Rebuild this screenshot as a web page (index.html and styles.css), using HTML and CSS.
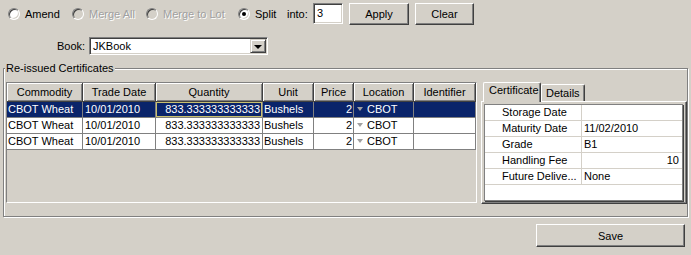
FILE: index.html
```html
<!DOCTYPE html>
<html lang="en">
<head>
  <meta charset="UTF-8">
  <title>Re-issue Certificates</title>
  <link rel="stylesheet" href="styles.css">
</head>
<body>
  <div class="window">

    <div class="toolbar">
      <label class="opt opt-amend"><span class="radio"></span>Amend</label>
      <label class="opt opt-mergeall disabled"><span class="radio"></span>Merge All</label>
      <label class="opt opt-mergelot disabled"><span class="radio"></span>Merge to Lot</label>
      <label class="opt opt-split"><span class="radio checked"></span>Split</label>
      <span class="into">into:</span>
      <span class="field into-field">3</span>
      <span class="btn btn-apply">Apply</span>
      <span class="btn btn-clear">Clear</span>
    </div>

    <div class="book-row">
      <span class="book-label">Book:</span>
      <span class="combo">
        <span class="combo-text">JKBook</span>
        <span class="combo-btn"><span class="arrow"></span></span>
      </span>
    </div>

    <fieldset class="group">
      <legend>Re-issued Certificates</legend>
      <div class="group-body">

        <div class="grid-box">
          <table class="grid">
            <colgroup>
              <col class="c-commodity"><col class="c-date"><col class="c-qty"><col class="c-unit">
              <col class="c-price"><col class="c-loc"><col class="c-ident">
            </colgroup>
            <thead>
              <tr>
                <th>Commodity</th><th>Trade Date</th><th>Quantity</th><th>Unit</th>
                <th>Price</th><th>Location</th><th>Identifier</th>
              </tr>
            </thead>
            <tbody>
              <tr class="selected">
                <td>CBOT Wheat</td><td class="date">10/01/2010</td>
                <td class="num qty focus">833.333333333333</td><td>Bushels</td>
                <td class="num">2</td><td class="loc"><span class="tri"></span>CBOT</td><td></td>
              </tr>
              <tr>
                <td>CBOT Wheat</td><td class="date">10/01/2010</td>
                <td class="num qty">833.333333333333</td><td>Bushels</td>
                <td class="num">2</td><td class="loc"><span class="tri"></span>CBOT</td><td></td>
              </tr>
              <tr>
                <td>CBOT Wheat</td><td class="date">10/01/2010</td>
                <td class="num qty">833.333333333333</td><td>Bushels</td>
                <td class="num">2</td><td class="loc"><span class="tri"></span>CBOT</td><td></td>
              </tr>
            </tbody>
          </table>
        </div>

        <div class="tabs">
          <div class="tab-strip">
            <span class="tab active">Certificate</span>
            <span class="tab">Details</span>
          </div>
          <div class="tab-page">
            <div class="props">
              <div class="prop"><span class="prop-name">Storage Date</span><span class="prop-val"></span></div>
              <div class="prop"><span class="prop-name">Maturity Date</span><span class="prop-val">11/02/2010</span></div>
              <div class="prop"><span class="prop-name">Grade</span><span class="prop-val">B1</span></div>
              <div class="prop"><span class="prop-name">Handling Fee</span><span class="prop-val right">10</span></div>
              <div class="prop"><span class="prop-name">Future Delive...</span><span class="prop-val">None</span></div>
            </div>
          </div>
        </div>

      </div>
    </fieldset>

    <div class="footer">
      <span class="btn btn-save">Save</span>
    </div>

  </div>
</body>
</html>
```

FILE: styles.css
```css
body{
  margin: 0;
  padding: 0;
  background: #d4d0c8;
  font-family: "Liberation Sans", Arial, sans-serif;
  font-size: 11px;
  color: #000;
}
.window{
  width: 691px;
  height: 255px;
  overflow: hidden;
}

/* top row */
.toolbar{
  display: flex;
  align-items: center;
  height: 22px;
  padding: 3px 0 0 8px;
}
.opt{
  display: flex;
  align-items: center;
  gap: 5px;
}
.opt-amend{ width: 64px; }
.opt-mergeall{ width: 74px; }
.opt-mergelot{ width: 92px; }
.opt-split{ width: 49px; }
.radio{
  position: relative;
  flex: none;
  width: 12px;
  height: 12px;
  box-sizing: border-box;
  border-radius: 50%;
  background: #fff;
  border: 1px solid;
  border-color: #808080 #fff #fff #808080;
  box-shadow: inset 1px 1px #404040, inset -1px -1px #d4d0c8;
}
.radio.checked::after{
  content: "";
  position: absolute;
  left: 3px;
  top: 3px;
  width: 4px;
  height: 4px;
  border-radius: 50%;
  background: #000;
}
.disabled{
  color: #a0a0a0;
  text-shadow: 1px 1px #fff;
}
.disabled .radio{
  background: #d4d0c8;
}
.into{
  width: 26px;
}
.field{
  box-sizing: border-box;
  background: #fff;
  border: 1px solid;
  border-color: #808080 #fff #fff #808080;
  box-shadow: inset 1px 1px #404040, inset -1px -1px #d4d0c8;
}
.into-field{
  width: 30px;
  height: 21px;
  margin-top: -1px;
  padding: 3px 0 0 3px;
}
.btn{
  display: flex;
  align-items: center;
  justify-content: center;
  box-sizing: border-box;
  background: #d4d0c8;
  border: 1px solid;
  border-color: #fff #404040 #404040 #fff;
  box-shadow: inset -1px -1px #808080;
}
.btn-apply{
  width: 60px;
  height: 22px;
  margin-left: 6px;
}
.btn-clear{
  width: 59px;
  height: 22px;
  margin-left: 6px;
}

/* book row */
.book-row{
  display: flex;
  align-items: center;
  height: 18px;
  margin: 12px 0 0 57px;
}
.book-label{
  width: 32px;
}
.combo{
  display: flex;
  width: 179px;
  height: 18px;
  box-sizing: border-box;
  background: #fff;
  border: 1px solid;
  border-color: #808080 #fff #fff #808080;
  box-shadow: inset 1px 1px #404040, inset -1px -1px #d4d0c8;
  padding: 2px 1px 1px 2px;
}
.combo-text{
  flex: 1;
  line-height: 13px;
  padding-left: 1px;
}
.combo-btn{
  display: flex;
  align-items: center;
  justify-content: center;
  width: 16px;
  height: 14px;
  margin-top: -1px;
  box-sizing: border-box;
  background: #d4d0c8;
  border: 1px solid;
  border-color: #d4d0c8 #404040 #404040 #d4d0c8;
  box-shadow: inset 1px 1px #fff, inset -1px -1px #808080;
}
.arrow{
  width: 0;
  height: 0;
  border-left: 4px solid transparent;
  border-right: 4px solid transparent;
  border-top: 4px solid #000;
  margin-top: 1px;
}

/* group */
.group{
  margin: 7px 3px 0 3px;
  padding: 8px 0 12px 2px;
  border: 1px solid #808080;
  box-shadow: inset 1px 1px #fff, 1px 1px #fff;
  min-inline-size: 0;
}
.group legend{
  padding: 0 1px;
  margin-left: -1px;
  line-height: 12px;
  background: #d4d0c8;
}
.group-body{
  display: flex;
  gap: 4px;
  height: 122px;
}

/* certificates table */
.grid-box{
  width: 469px;
  height: 119px;
  background: #d4d0c8;
  border: 1px solid;
  border-color: #808080 #fff #fff #808080;
}
.grid{
  table-layout: fixed;
  width: 469px;
  border-collapse: separate;
  border-spacing: 0;
}
.c-commodity{ width: 76px; }
.c-date{ width: 73px; }
.c-qty{ width: 107px; }
.c-unit{ width: 51px; }
.c-price{ width: 40px; }
.c-loc{ width: 60px; }
.c-ident{ width: 62px; }
.grid th{
  height: 19px;
  padding: 0;
  font-weight: normal;
  text-align: center;
  background: #d4d0c8;
  box-sizing: border-box;
  border-right: 1px solid #404040;
  border-bottom: 1px solid #404040;
  box-shadow: inset 1px 1px #fff, inset -1px -1px #808080;
}
.grid td{
  height: 16px;
  padding: 0 1px;
  box-sizing: border-box;
  line-height: 15px;
  background: #fff;
  white-space: nowrap;
  overflow: hidden;
  border-right: 1px solid #808080;
  border-bottom: 1px solid #808080;
}
.grid td.date{
  padding-left: 2px;
}
.grid td.num{
  text-align: right;
}
.grid td.qty{
  padding-right: 2px;
}
.grid tr.selected td{
  background: #0a246a;
  color: #fff;
}
.grid tr.selected td.focus{
  box-shadow: inset 0 0 0 1px #c8c070;
}
.grid td.loc{
  padding-left: 3px;
}
.tri{
  display: inline-block;
  width: 0;
  height: 0;
  border-left: 3px solid transparent;
  border-right: 3px solid transparent;
  border-top: 4px solid #a0a0a0;
  margin: 0 4px 2px 0;
  vertical-align: middle;
}

/* tab control */
.tabs{
  flex: 1;
  display: flex;
  flex-direction: column;
}
.tab-strip{
  display: flex;
  align-items: flex-end;
  height: 19px;
  padding-left: 2px;
}
.tab{
  position: relative;
  box-sizing: border-box;
  height: 17px;
  padding: 2px 4px 0 4px;
  background: #d4d0c8;
  border-top: 1px solid #fff;
  border-left: 1px solid #fff;
  border-right: 1px solid #404040;
  border-radius: 2px 2px 0 0;
  box-shadow: inset -1px 0 #808080;
}
.tab.active{
  height: 20px;
  margin-bottom: -1px;
  padding: 1px 5px 0 5px;
  z-index: 1;
  width: 58px;
}
.tab-page{
  flex: 1;
  box-sizing: border-box;
  border: 1px solid;
  border-color: #fff #404040 #404040 #fff;
  box-shadow: inset -1px -1px #808080;
  padding: 2px 3px 0 2px;
}
.props{
  height: 97px;
  box-sizing: border-box;
  background: #fff;
  border: 1px solid #808080;
  box-shadow: 1px 1px #404040;
}
.prop{
  display: flex;
  height: 16px;
  box-sizing: border-box;
  border-bottom: 1px solid #d4d0c8;
  line-height: 15px;
}
.prop-name{
  width: 97px;
  box-sizing: border-box;
  padding-left: 17px;
  border-right: 1px solid #d4d0c8;
  white-space: nowrap;
}
.prop-val{
  flex: 1;
  padding: 0 3px 0 2px;
}
.prop-val.right{
  text-align: right;
}

/* bottom */
.footer{
  display: flex;
  justify-content: flex-end;
  padding: 7px 6px 0 0;
}
.btn-save{
  width: 149px;
  height: 23px;
}
```
